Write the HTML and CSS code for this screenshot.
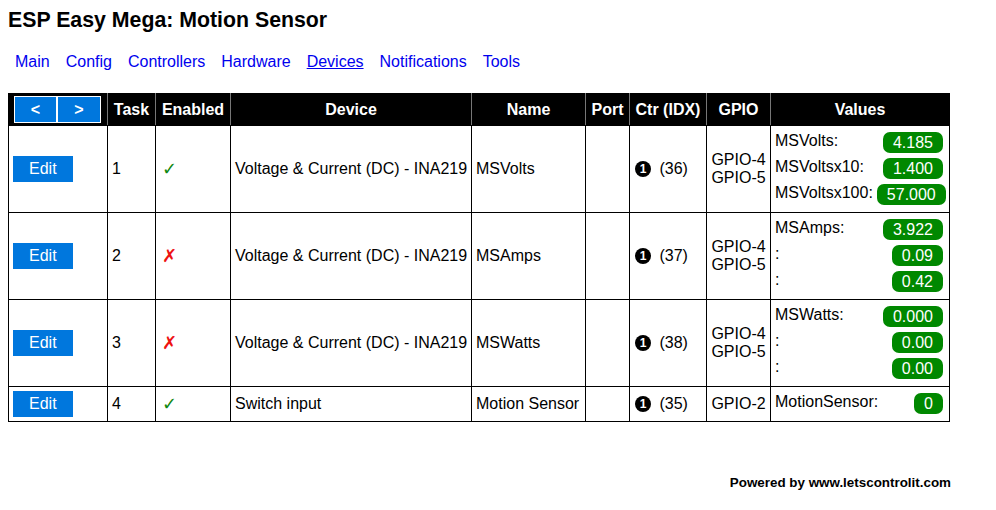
FILE: index.html
```html
<!DOCTYPE html>
<html lang="en">
<head>
    <meta charset="UTF-8">
    <title>ESP Easy Mega: Motion Sensor</title>
    <link rel="stylesheet" href="styles.css">
</head>
<body>
    <div class="title">ESP Easy Mega: Motion Sensor</div>

    <div class="menubar">
        <a class="menu" href="#">Main</a>
        <a class="menu" href="#">Config</a>
        <a class="menu" href="#">Controllers</a>
        <a class="menu" href="#">Hardware</a>
        <a class="menu active" href="#">Devices</a>
        <a class="menu" href="#">Notifications</a>
        <a class="menu" href="#">Tools</a>
    </div>

    <table class="devices">
        <colgroup>
            <col style="width: 99px">
            <col style="width: 48px">
            <col style="width: 75px">
            <col style="width: 241px">
            <col style="width: 114px">
            <col style="width: 44px">
            <col style="width: 77px">
            <col style="width: 64px">
            <col style="width: 179px">
        </colgroup>
        <tr>
            <th class="nav-cell">
                <div class="pager">
                    <a class="page-btn" href="#">&lt;</a><a class="page-btn" href="#">&gt;</a>
                </div>
            </th>
            <th>Task</th>
            <th>Enabled</th>
            <th>Device</th>
            <th>Name</th>
            <th>Port</th>
            <th>Ctr (IDX)</th>
            <th>GPIO</th>
            <th>Values</th>
        </tr>
        <tr>
            <td><a class="button" href="#">Edit</a></td>
            <td>1</td>
            <td><span class="on">&#10003;</span></td>
            <td>Voltage &amp; Current (DC) - INA219</td>
            <td>MSVolts</td>
            <td></td>
            <td><span class="ctr">1</span> (36)</td>
            <td class="gpio">GPIO-4<br>GPIO-5</td>
            <td>
                <div class="val-row"><div class="div_l">MSVolts:</div><div class="div_r">4.185</div></div>
                <div class="val-row"><div class="div_l">MSVoltsx10:</div><div class="div_r">1.400</div></div>
                <div class="val-row"><div class="div_l">MSVoltsx100:</div><div class="div_r">57.000</div></div>
            </td>
        </tr>
        <tr>
            <td><a class="button" href="#">Edit</a></td>
            <td>2</td>
            <td><span class="off">&#10007;</span></td>
            <td>Voltage &amp; Current (DC) - INA219</td>
            <td>MSAmps</td>
            <td></td>
            <td><span class="ctr">1</span> (37)</td>
            <td class="gpio">GPIO-4<br>GPIO-5</td>
            <td>
                <div class="val-row"><div class="div_l">MSAmps:</div><div class="div_r">3.922</div></div>
                <div class="val-row"><div class="div_l">:</div><div class="div_r">0.09</div></div>
                <div class="val-row"><div class="div_l">:</div><div class="div_r">0.42</div></div>
            </td>
        </tr>
        <tr>
            <td><a class="button" href="#">Edit</a></td>
            <td>3</td>
            <td><span class="off">&#10007;</span></td>
            <td>Voltage &amp; Current (DC) - INA219</td>
            <td>MSWatts</td>
            <td></td>
            <td><span class="ctr">1</span> (38)</td>
            <td class="gpio">GPIO-4<br>GPIO-5</td>
            <td>
                <div class="val-row"><div class="div_l">MSWatts:</div><div class="div_r">0.000</div></div>
                <div class="val-row"><div class="div_l">:</div><div class="div_r">0.00</div></div>
                <div class="val-row"><div class="div_l">:</div><div class="div_r">0.00</div></div>
            </td>
        </tr>
        <tr>
            <td><a class="button" href="#">Edit</a></td>
            <td>4</td>
            <td><span class="on">&#10003;</span></td>
            <td>Switch input</td>
            <td>Motion Sensor</td>
            <td></td>
            <td><span class="ctr">1</span> (35)</td>
            <td class="gpio">GPIO-2</td>
            <td>
                <div class="val-row"><div class="div_l">MotionSensor:</div><div class="div_r">0</div></div>
            </td>
        </tr>
    </table>

    <div class="footer">Powered by www.letscontrolit.com</div>
</body>
</html>
```
FILE: styles.css
```css
body {
    margin: 8px;
    font-family: "Liberation Sans", Arial, sans-serif;
    font-size: 16px;
    color: black;
    background: white;
}
.title {
    font-size: 21.3px;
    font-weight: bold;
    line-height: 24px;
}
.menubar {
    margin-top: 21px;
    padding-left: 7px;
    line-height: 18px;
    display: flex;
    gap: 16px;
}
.menu {
    color: #0000ee;
    text-decoration: none;
}
.menu.active {
    text-decoration: underline;
}
.devices {
    margin-top: 22px;
    width: 941px;
    table-layout: fixed;
    border-collapse: collapse;
}
.devices th {
    background-color: black;
    color: white;
    font-weight: bold;
    padding: 2px 4px;
    height: 27px;
    border: 1px solid black;
    border-right-color: #777;
    white-space: nowrap;
}
.devices th:last-child {
    border-right-color: black;
}
.devices td {
    border: 1px solid black;
    padding: 4px;
    vertical-align: middle;
    white-space: nowrap;
    line-height: 18px;
}
.pager {
    display: flex;
    margin-left: 1px;
}
.page-btn {
    display: block;
    width: 41px;
    height: 25px;
    line-height: 25px;
    text-align: center;
    background-color: #0077dd;
    color: white;
    text-decoration: none;
    border: 1px solid white;
}
.page-btn + .page-btn {
    width: 42px;
}
.button {
    display: inline-block;
    padding: 4px 16px;
    background-color: #0077dd;
    color: white;
    text-decoration: none;
}
.on,
.off {
    font-family: "DejaVu Sans", sans-serif;
    font-size: 18px;
    font-weight: bold;
    margin-left: 2px;
}
.on {
    color: #118811;
}
.off {
    color: #ee1111;
}
.ctr {
    display: inline-block;
    width: 16px;
    height: 16px;
    line-height: 16px;
    border-radius: 50%;
    background: black;
    color: white;
    font-size: 12px;
    font-weight: bold;
    text-align: center;
    vertical-align: middle;
    margin: -2px 4px 0 1px;
}
.gpio {
    text-align: center;
}
.val-row {
    display: flex;
    justify-content: space-between;
    align-items: flex-start;
}
.div_l {
    padding-top: 2px;
}
.div_r {
    margin: 2px 2px 3px 4px;
    padding: 1px 10px;
    line-height: 19px;
    border-radius: 7px;
    background-color: #008800;
    color: white;
}
.footer {
    width: 943px;
    margin-top: 53px;
    text-align: right;
    font-size: 13.4px;
    font-weight: bold;
}
```
